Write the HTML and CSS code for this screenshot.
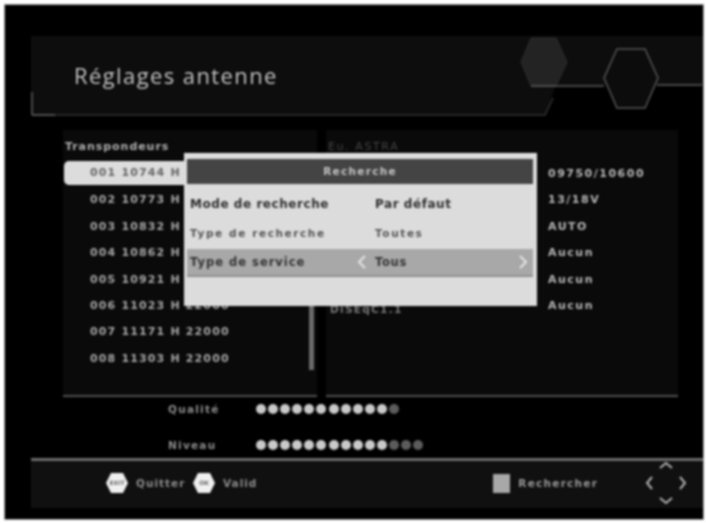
FILE: index.html
```html
<!DOCTYPE html>
<html lang="fr">
<head>
<meta charset="utf-8">
<title>Réglages antenne</title>
<link rel="stylesheet" href="styles.css">
</head>
<body>
<div class="screen">
  <header class="title-bar">
    <h1 class="title">Réglages antenne</h1>
  </header>
  <svg class="hexes" width="706" height="125" viewBox="0 0 706 125" aria-hidden="true">
    <path d="M32 115H545L553 98" class="line-dim"/>
    <path d="M32 115H55M32 115V92" class="line-mid"/>
    <path d="M531 38H556L567 62L556 86H531L521 62Z" class="hex-a"/>
    <path d="M531 86H604M657 85H702" class="line"/>
    <path d="M617 49H645L658 78L645 108H617L604 78Z" class="hex-b"/>
  </svg>

  <main class="content">
    <section class="panel panel-left">
      <h2 class="panel-title">Transpondeurs</h2>
      <ul class="tp-list">
        <li class="tp tp-on">001 10744 H</li>
        <li class="tp">002 10773 H</li>
        <li class="tp">003 10832 H</li>
        <li class="tp">004 10862 H</li>
        <li class="tp">005 10921 H</li>
        <li class="tp">006 11023 H 22000</li>
        <li class="tp">007 11171 H 22000</li>
        <li class="tp">008 11303 H 22000</li>
      </ul>
      <div class="scrollbar"></div>
    </section>
    <section class="panel panel-right">
      <h2 class="panel-title sat">Eu. ASTRA</h2>
      <div class="settings">
        <span class="set-label"></span><span class="set-value">09750/10600</span>
        <span class="set-label"></span><span class="set-value">13/18V</span>
        <span class="set-label"></span><span class="set-value">AUTO</span>
        <span class="set-label"></span><span class="set-value">Aucun</span>
        <span class="set-label"></span><span class="set-value">Aucun</span>
        <span class="set-label">DiSEqC1.1</span><span class="set-value">Aucun</span>
      </div>
    </section>

    <div class="dialog">
      <div class="dialog-head">Recherche</div>
      <div class="dialog-row row-big"><span class="d-label">Mode de recherche</span><span class="d-value">Par défaut</span></div>
      <div class="dialog-row row-mid"><span class="d-label">Type de recherche</span><span class="d-value">Toutes</span></div>
      <div class="dialog-row row-on">
        <span class="d-label">Type de service</span>
        <span class="d-value">Tous</span>
        <svg class="arrow arrow-l" width="10" height="14" viewBox="0 0 10 14"><path d="M8 1L2 7L8 13"/></svg>
        <svg class="arrow arrow-r" width="10" height="14" viewBox="0 0 10 14"><path d="M2 1L8 7L2 13"/></svg>
      </div>
    </div>
  </main>

  <section class="signal">
    <div class="meter meter-q">
      <span class="meter-label">Qualité</span>
      <span class="dots"><i class="dot"></i><i class="dot"></i><i class="dot"></i><i class="dot"></i><i class="dot"></i><i class="dot"></i><i class="dot"></i><i class="dot"></i><i class="dot"></i><i class="dot"></i><i class="dot"></i><i class="dot off"></i></span>
    </div>
    <div class="meter meter-n">
      <span class="meter-label">Niveau</span>
      <span class="dots"><i class="dot"></i><i class="dot"></i><i class="dot"></i><i class="dot"></i><i class="dot"></i><i class="dot"></i><i class="dot"></i><i class="dot"></i><i class="dot"></i><i class="dot"></i><i class="dot"></i><i class="dot off"></i><i class="dot off"></i><i class="dot off"></i></span>
    </div>
  </section>

  <footer class="footer">
    <span class="key"><svg width="24" height="22" viewBox="0 0 24 22"><path d="M6 1H18L23 11L18 21H6L1 11Z" class="key-hex"/></svg><b class="key-text">EXIT</b></span>
    <span class="hint hint-quit">Quitter</span>
    <span class="key"><svg width="24" height="22" viewBox="0 0 24 22"><path d="M6 1H18L23 11L18 21H6L1 11Z" class="key-hex"/></svg><b class="key-text">OK</b></span>
    <span class="hint">Valid</span>
    <span class="square"></span>
    <span class="hint hint-search">Rechercher</span>
    <svg class="dpad" width="42" height="46" viewBox="0 0 42 46">
      <path d="M15 8L21 3L27 8M15 38L21 43L27 38M7 17L2 23L7 29M35 17L40 23L35 29"/>
    </svg>
  </footer>
</div>
</body>
</html>
```
FILE: styles.css
```css
* { box-sizing: border-box; }
html, body { margin: 0; padding: 0; background: #fff; }
body { width: 706px; height: 523px; overflow: hidden; font-family: "DejaVu Sans", sans-serif; }

.screen {
  position: relative;
  width: 698px;
  height: 514px;
  margin: 5px 0 0 5px;
  background: #000;
  outline: 1px solid #9a9a9a;
  overflow: hidden;
  filter: blur(0.9px);
}

.title-bar {
  height: 79px;
  margin: 31px 0 0 26px;
  padding: 22px 0 0 43px;
  background: #0d0d0d;
  clip-path: polygon(0 0, 100% 0, 100% 49px, 525px 49px, 514px 79px, 0 79px);
}
.title { margin: 0; font: 400 22px/34px "Open Sans", sans-serif; letter-spacing: 1.4px; color: #c4c4c4; }
.hexes { position: absolute; left: -5px; top: -5px; fill: none; }
.line { stroke: #5c5c5c; stroke-width: 1.5; }
.line-dim { stroke: #333; stroke-width: 1.5; fill: none; }
.line-mid { stroke: #5c5c5c; stroke-width: 1.5; fill: none; }
.hex-a { fill: #232323; stroke: #2e2e2e; stroke-width: 1; }
.hex-b { fill: #0c0c0c; stroke: #565656; stroke-width: 1.5; }

.content {
  position: relative;
  display: flex;
  gap: 9px;
  height: 267px;
  margin: 15px 0 0 58px;
}
.panel { position: relative; height: 267px; background: #0a0a0a; border-bottom: 2px solid #505050; }
.panel-left { width: 254px; }
.panel-right { width: 352px; }
.panel-title { margin: 0; padding: 9px 0 0 2px; height: 31px; font: 700 11px/16px "DejaVu Sans", sans-serif; letter-spacing: 0.95px; color: #b0b0b0; white-space: nowrap; }
.sat { color: #444; font-weight: 400; letter-spacing: 1.6px; }

.tp-list { list-style: none; margin: 0; padding: 0; }
.tp {
  height: 26.4px;
  margin-left: 1px;
  padding-left: 26px;
  font: 700 11px/25px "DejaVu Sans", sans-serif;
  letter-spacing: 1.15px;
  color: #a6a6a6;
  white-space: nowrap;
}
.tp-on { height: 24px; margin-bottom: 2.4px; background: #dcdcdc; border-radius: 5px 0 0 5px; color: #666; width: 240px; line-height: 24px; }
.scrollbar { position: absolute; left: 246px; top: 30px; width: 5px; height: 210px; background: #6a6a6a; }

.settings { display: grid; grid-template-columns: 222px 1fr; grid-auto-rows: 26.4px; line-height: 25px; }
.set-label { padding-left: 4px; font: 700 10.5px/33px "DejaVu Sans", sans-serif; letter-spacing: 1.3px; color: #777; white-space: nowrap; }
.set-value { font: 700 11px/25px "DejaVu Sans", sans-serif; letter-spacing: 1.5px; color: #b8b8b8; }

.dialog {
  position: absolute;
  left: 121px;
  top: 23px;
  width: 353px;
  height: 153px;
  padding: 5px 4px 0 3px;
  background: #dcdcdc;
  border-top: 1px solid #f0f0f0;
}
.dialog-head {
  height: 25px;
  margin-bottom: 6px;
  background: #444;
  color: #c4c4c4;
  text-align: center;
  font: 700 10.5px/25px "DejaVu Sans", sans-serif;
  letter-spacing: 1.3px;
}
.dialog-row {
  position: relative;
  display: flex;
  height: 29px;
  padding-left: 3px;
  align-items: center;
  color: #555;
  font: 700 10.5px/16px "DejaVu Sans", sans-serif;
  letter-spacing: 1.6px;
}
.row-big { font-size: 12px; letter-spacing: 0.55px; color: #2e2e2e; height: 29px; padding-bottom: 2px; }
.row-mid { height: 30px; padding-bottom: 3px; }
.d-label { width: 185px; flex: none; white-space: nowrap; overflow: hidden; }
.row-on { height: 28px; background: #a8a8a8; color: #333; font-size: 11.5px; letter-spacing: 1px; border-bottom: 2px solid #8f8f8f; }
.row-on .d-value { letter-spacing: 0.7px; }
.arrow { position: absolute; top: 6px; fill: none; stroke: #e4e4e4; stroke-width: 2; }
.arrow-l { left: 170px; }
.arrow-r { left: 331px; }

.signal { position: relative; height: 57px; }
.meter { display: flex; align-items: center; height: 16px; padding-left: 163px; }
.meter-q { margin-top: 4px; }
.meter-n { margin-top: 20px; }
.meter-label { width: 88px; font: 700 10.5px/16px "DejaVu Sans", sans-serif; letter-spacing: 1.25px; color: #8c8c8c; }
.dots { display: flex; gap: 2.1px; }
.dot { display: block; width: 10px; height: 10px; border-radius: 50%; background: #cacaca; }
.off { background: #5c5c5c; }

.footer {
  display: flex;
  align-items: center;
  height: 50px;
  margin-left: 26px;
  padding: 0 0 3px 74px;
  background: #101010;
  border-top: 3px solid #6a6a6a;
}
.key { position: relative; display: flex; width: 24px; height: 22px; flex: none; }
.key-hex { fill: #f0f0f0; }
.key-text { position: absolute; left: 0; right: 0; top: 6px; text-align: center; font: 700 6px/10px "DejaVu Sans", sans-serif; color: #666; }
.hint { margin-left: 7px; font: 700 10.5px/16px "DejaVu Sans", sans-serif; letter-spacing: 1px; color: #8c8c8c; }
.hint-quit { width: 51px; margin-right: 5px; }
.square { width: 17px; height: 19px; margin-left: 236px; background: #a8a8a8; flex: none; }
.hint-search { margin-left: 8px; letter-spacing: 1.25px; color: #999; width: 108px; }
.dpad { fill: none; stroke: #b0b0b0; stroke-width: 2; flex: none; margin-left: 19px; }
```
